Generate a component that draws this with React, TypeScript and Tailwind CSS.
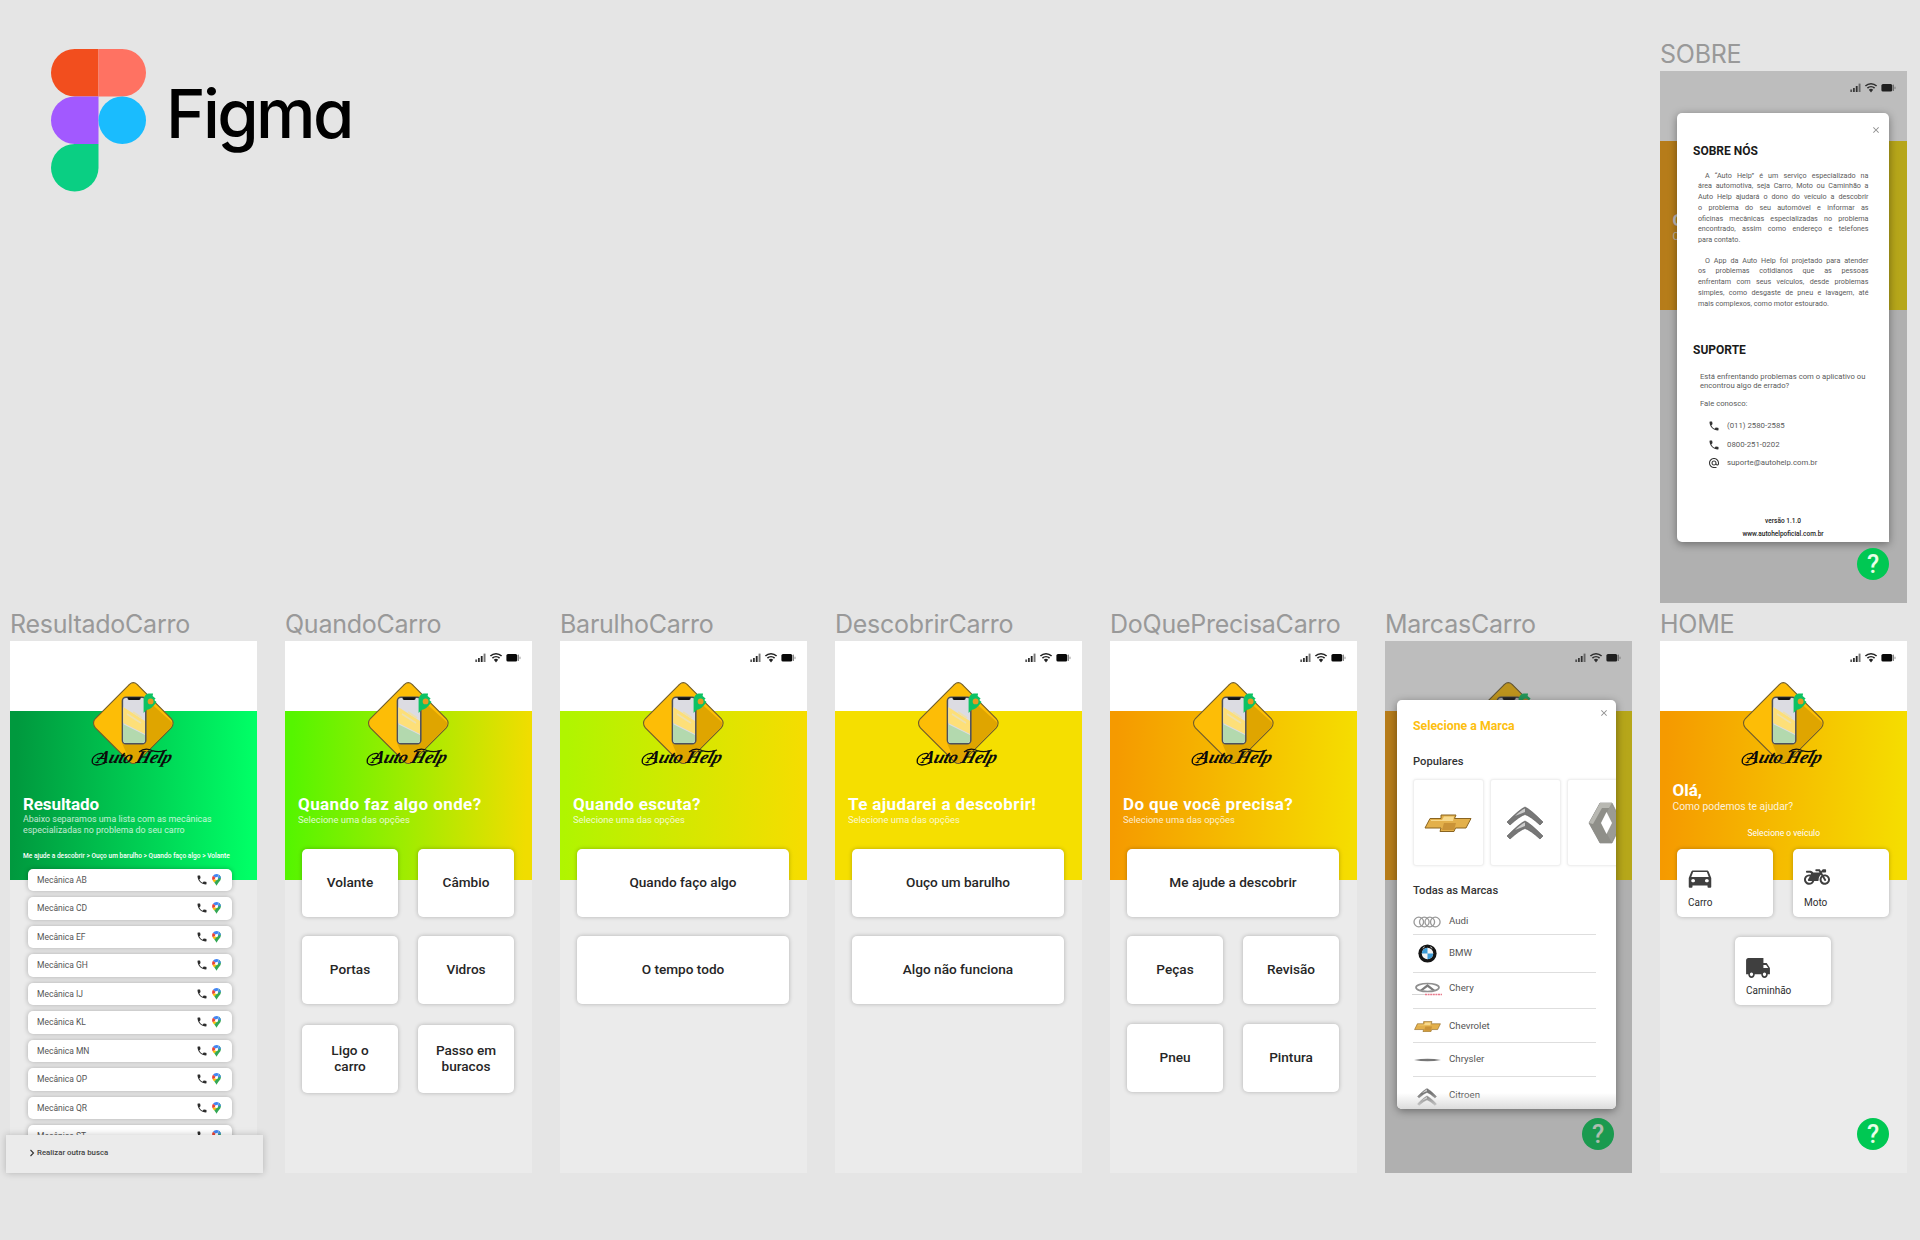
import React from "react";
import { MdPhone, MdDirectionsCar, MdLocalShipping, MdAlternateEmail, MdClose } from "react-icons/md";
import { FaMotorcycle } from "react-icons/fa";

const roboto = "font-['Roboto',sans-serif]";

function FigmaMark() {
  return (
    <svg width="95" height="143" viewBox="0 0 95 143" className="shrink-0">
      <path d="M47.5 0H23.75a23.75 23.75 0 0 0 0 47.5H47.5z" fill="#f24e1e" />
      <path d="M47.5 0h23.75a23.75 23.75 0 0 1 0 47.5H47.5z" fill="#ff7262" />
      <path d="M47.5 47.5H23.75a23.75 23.75 0 0 0 0 47.5H47.5z" fill="#a259ff" />
      <circle cx="71.25" cy="71.25" r="23.75" fill="#1abcfe" />
      <path d="M47.5 95H23.75A23.75 23.75 0 1 0 47.5 118.75z" fill="#0acf83" />
    </svg>
  );
}

function StatusIcons() {
  return (
    <svg width="46" height="12" viewBox="0 0 46 12" className="absolute top-[11px] left-[190px]">
      <rect x="0.3" y="7.5" width="1.8" height="2.5" fill="#555" />
      <rect x="3" y="6" width="1.8" height="4" fill="#333" />
      <rect x="5.8" y="4" width="1.8" height="6" fill="#222" />
      <rect x="8.6" y="1.6" width="1.9" height="8.4" fill="#777" />
      <path d="M15.4 4a8 8 0 0 1 11.2 0M17.4 6.2a5.2 5.2 0 0 1 7.2 0" fill="none" stroke="#222" strokeWidth="1.6" />
      <path d="M21 10.4l-2.2-2.6a3.2 3.2 0 0 1 4.4 0z" fill="#222" />
      <rect x="31.4" y="2" width="10.8" height="7.6" rx="1.6" fill="#080808" />
      <rect x="42.6" y="2.6" width="1.4" height="6.4" rx="0.6" fill="#888" />
      <rect x="44.4" y="4.4" width="1.2" height="2.8" rx="0.6" fill="#aaa" />
    </svg>
  );
}

function AppLogo() {
  return (
    <div className="absolute top-[40.500px] left-[81px] h-[88px] w-[84px]">
      <svg width="84" height="88" viewBox="0 0 84 88">
        <path d="M38.5 2.3Q42.3-1 46.1 2.3L80.2 36.5Q84 41 80.2 46L46 80Q42.3 83 38.6 80L4.4 46Q0.6 41 4.4 36.5z" fill="#fdbd06" stroke="#6f5c2c" strokeWidth="1.1" />
        <path d="M54 16L80 39.5Q82.6 42 79.4 45.6L46 79.4Q42.3 82 39 79.6L31 61H54z" fill="#dfa500" />
        <rect x="31.4" y="15.2" width="23.4" height="46.6" rx="3.6" fill="#dcdce2" stroke="#4b4f5c" strokeWidth="1.5" />
        <path d="M32.2 25l21.8 14v13L32.2 41z" fill="#fddf78" />
        <path d="M36 32l14 9M42 30l9 6" stroke="#ece0b0" strokeWidth="1.6" />
        <path d="M32.2 42.2L54 53v4.8q0 3.2-3 3.2H35q-2.8 0-2.8-3.2z" fill="#b3d9ae" />
        <path d="M36.6 15.2h13v1.4q0 1.4-1.6 1.4h-9.8q-1.6 0-1.6-1.4z" fill="#111" />
        <path d="M52.6 31V17q1-5 5-5.500h4.500l-0.500 2.500 3 2.500-1.300 1.500 2.200 2q-5 7.500-10 8z" fill="#0dc264" />
        <circle cx="59.600" cy="19.400" r="2.900" fill="#e89a20" />
      </svg>
      <div className="absolute top-[64px] left-[7px] -skew-x-[18deg] font-['Liberation_Serif',serif] text-[18px] leading-[22px] font-bold tracking-[-0.3px] whitespace-nowrap text-[#0b0b0b] italic">
        Auto Help
      </div>
      <svg width="84" height="20" viewBox="0 0 84 20" className="absolute top-[66px] left-0" fill="none" stroke="#0b0b0b" strokeWidth="1.300">
        <path d="M14 15Q4 19 1.500 15Q0 9 7 6Q13 4 12 8Q9 12 6 10" />
        <path d="M48 4Q54-1 61 2.500Q68 5 76 2" />
      </svg>
    </div>
  );
}

function HelpButton() {
  return (
    <div className={`absolute top-[477px] right-[18px] flex h-8 w-8 items-center justify-center rounded-full bg-[#00c853] ${roboto} text-[25px] leading-none font-medium text-[#e8ffe9]`}>
      ?
    </div>
  );
}

function Tile({ children, className = "w-[96px]" }: { children: React.ReactNode; className?: string }) {
  return (
    <div className={`flex h-[68px] items-center justify-center rounded-[5px] bg-white text-center ${roboto} text-[13.600px] leading-[15.500px] font-medium text-[#262626] shadow-[0_0_4px_rgba(0,0,0,0.25)] ${className}`}>
      {children}
    </div>
  );
}

const Pair = ({ children }: { children: React.ReactNode }) => <div className="flex gap-[20px]">{children}</div>;

const Tiles = ({ children }: { children: React.ReactNode }) => (
  <div className="-mt-[31px] ml-[17px] flex flex-col gap-[19.500px]">{children}</div>
);

type FrameProps = {
  name: string;
  band: string;
  status?: boolean;
  logo?: boolean;
  header?: React.ReactNode;
  overlay?: React.ReactNode;
  children?: React.ReactNode;
};

function Artboard({ name, band, status = true, logo = true, header, overlay, children }: FrameProps) {
  return (
    <section className="w-[247px] shrink-0">
      <h2 className="h-[38px] font-['Inter',sans-serif] text-[25px] leading-[42px] font-normal tracking-[-0.25px] whitespace-nowrap text-[#999]">{name}</h2>
      <div className="relative flex h-[532px] flex-col bg-[#ebebeb]">
        <div className="h-[70px] shrink-0 bg-white" />
        <div className={`h-[168.500px] shrink-0 ${band}`}>{header}</div>
        {logo && <AppLogo />}
        {status && <StatusIcons />}
        {children}
        {overlay}
      </div>
    </section>
  );
}

function Heading({ title, tracking }: { title: string; tracking: string }) {
  return (
    <div className={`pt-[83px] pl-[13px] text-white ${roboto}`}>
      <div className={`text-[17px] leading-[20px] font-bold whitespace-nowrap ${tracking}`}>{title}</div>
      <div className="text-[9.400px] leading-[11px] whitespace-nowrap opacity-80">Selecione uma das opções</div>
    </div>
  );
}

function HomeHeading() {
  return (
    <div className={`pt-[69px] pl-[12.500px] text-white ${roboto}`}>
      <div className="text-[17px] leading-[20px] font-bold">Olá,</div>
      <div className="text-[10.300px] leading-[13px] opacity-85">Como podemos te ajudar?</div>
      <div className="mt-[14px] pr-[12px] text-center text-[8.500px] leading-[12px]">Selecione o veículo</div>
    </div>
  );
}

function MapPin() {
  return (
    <svg width="9" height="12" viewBox="0 0 9 12">
      <path d="M4.500 0A4.400 4.400 0 0 0 1 1.700l3.500 2.900L7 .8A4.400 4.400 0 0 0 4.500 0z" fill="#4285f4" />
      <path d="M1 1.700A4.400 4.400 0 0 0 .6 6.200L4.500 4.600z" fill="#ea4335" />
      <path d="M.6 6.200Q1.300 7.500 2.300 8.600L6.500 4z" fill="#fbbc04" />
      <path d="M7 .8A4.400 4.400 0 0 1 8.400 6.200Q6 9 4.500 11.700 3.600 10 2.300 8.600L6 4.400z" fill="#34a853" />
      <path d="M7 .8A4.400 4.400 0 0 1 8.900 4L6 4.400z" fill="#4285f4" />
      <circle cx="4.500" cy="4.400" r="1.500" fill="#fff" />
    </svg>
  );
}

const shops = ["AB", "CD", "EF", "GH", "IJ", "KL", "MN", "OP", "QR", "ST"];

function ResultadoCarro() {
  return (
    <Artboard
      name="ResultadoCarro"
      status={false}
      band="bg-[linear-gradient(92deg,#00993e_3%,#00d656_60%,#00ff66_97%)]"
      header={
        <div className={`pt-[83px] pl-[13px] whitespace-nowrap text-white ${roboto}`}>
          <div className="text-[17px] leading-[20px] font-bold tracking-[-0.1px]">Resultado</div>
          <div className="text-[8.900px] leading-[10.500px] opacity-75">
            Abaixo separamos uma lista com as mecânicas
            <br />
            especializadas no problema do seu carro
          </div>
          <div className="mt-[15.500px] text-[6.600px] leading-[10px] font-medium">
            Me ajude a descobrir &gt; Ouço um barulho &gt; Quando faço algo &gt; Volante
          </div>
        </div>
      }
    >
      <div className="-mt-[11px] ml-[18px] flex w-[204px] flex-col gap-[6px]">
        {shops.map((s) => (
          <div key={s} className="flex h-[22.500px] shrink-0 items-center rounded-[5px] bg-white pr-[11px] pl-[9px] shadow-[0_0_5px_rgba(0,0,0,0.28)]">
            <span className={`flex-1 ${roboto} text-[8.500px] leading-none text-[#555]`}>Mecânica {s}</span>
            <MdPhone className="mr-[4px] h-[12px] w-[12px] text-[#2c2c2c]" />
            <MapPin />
          </div>
        ))}
      </div>
      <div className={`absolute top-[494px] -left-[4px] flex h-[38px] w-[257px] items-center bg-[#ebebeb] pb-[2px] pl-[23px] ${roboto} text-[7.800px] font-medium text-[#444] shadow-[0_0_7px_rgba(0,0,0,0.22)]`}>
        <svg width="8" height="8" viewBox="0 0 8 8" fill="none" stroke="#333" strokeWidth="1.100">
          <path d="M1.500 1l3 3-3 3" />
        </svg>
        Realizar outra busca
      </div>
    </Artboard>
  );
}

function VehicleTile({ icon, label }: { icon: React.ReactNode; label: string }) {
  return (
    <div className={`flex h-[68px] w-[96px] flex-col rounded-[5px] bg-white pt-[16px] pl-[11px] ${roboto} text-[10px] text-[#2e2e2e] shadow-[0_0_4px_rgba(0,0,0,0.25)]`}>
      <div className="h-[24px] text-[#3f3f3f]">{icon}</div>
      <div className="mt-[7px] leading-[14px]">{label}</div>
    </div>
  );
}

const homeBand = "bg-[linear-gradient(92deg,#f59a00_3%,#f5bc00_50%,#f5dd00_97%)]";

function Home() {
  return (
    <Artboard name="HOME" band={homeBand} header={<HomeHeading />}>
      <div className="-mt-[31px] ml-[17px] flex w-[212px] flex-col items-center gap-[20px]">
        <Pair>
          <VehicleTile icon={<MdDirectionsCar preserveAspectRatio="none" className="-ml-[3px] h-[26px] w-[30px]" />} label="Carro" />
          <VehicleTile icon={<FaMotorcycle className="h-[24px] w-[26px]" />} label="Moto" />
        </Pair>
        <VehicleTile icon={<MdLocalShipping preserveAspectRatio="none" className="-ml-px h-[30px] w-[26px]" />} label="Caminhão" />
      </div>
      <HelpButton />
    </Artboard>
  );
}

function Scrim() {
  return <div className="absolute inset-0 bg-[rgba(72,72,72,0.36)]" />;
}

const about = [
  "A “Auto Help” é um serviço especializado na",
  "área automotiva, seja Carro, Moto ou Caminhão a",
  "Auto Help ajudará o dono do veículo a descobrir",
  "o problema do seu automóvel e informar as",
  "oficinas mecânicas especializadas no problema",
  "encontrado, assim como endereço e telefones",
  "para contato.",
];
const about2 = [
  "O App da Auto Help foi projetado para atender",
  "os problemas cotidianos que as pessoas",
  "enfrentam com seus veículos, desde problemas",
  "simples, como desgaste de pneu e lavagem, até",
  "mais complexos, como motor estourado.",
];

function Justified({ lines }: { lines: string[] }) {
  return (
    <div>
      {lines.map((l, i) => (
        <div
          key={l}
          className={`h-[10.800px] whitespace-nowrap ${i === lines.length - 1 ? "" : "[text-align-last:justify]"} ${i === 0 ? "pl-[7px]" : ""}`}
        >
          {l}
        </div>
      ))}
    </div>
  );
}

function Contact({ icon, children }: { icon: React.ReactNode; children: React.ReactNode }) {
  return (
    <div className="flex h-[18.500px] items-center gap-[7px] text-[7.800px]">
      {icon}
      <span>{children}</span>
    </div>
  );
}

function SobreModal() {
  return (
    <>
      <Scrim />
      <div className={`absolute top-[42px] left-[17px] flex h-[429px] w-[212px] flex-col rounded-[5px] rounded-br-none bg-white pt-[31px] pl-[16px] ${roboto} text-[#5a5a5a] shadow-[0_2px_8px_rgba(0,0,0,0.4)]`}>
        <MdClose className="absolute top-[12px] right-[8px] h-[10px] w-[10px] text-[#8a8a8a]" />
        <div className="text-[12px] leading-[14px] font-bold text-[#1a1a1a]">SOBRE NÓS</div>
        <div className="mt-[12.500px] ml-[5px] flex w-[170.500px] flex-col gap-[9.500px] text-[7.200px] leading-[10.800px]">
          <Justified lines={about} />
          <Justified lines={about2} />
        </div>
        <div className="mt-[33.500px] text-[12px] leading-[14px] font-bold text-[#1a1a1a]">SUPORTE</div>
        <div className="mt-[14.500px] ml-[7px] w-[169px] text-[7.700px] leading-[9px]">
          <div className="whitespace-nowrap">Está enfrentando problemas com o aplicativo ou</div>
          <div>encontrou algo de errado?</div>
          <div className="mt-[9px]">Fale conosco:</div>
        </div>
        <div className="mt-[9.500px] ml-[15px]">
          <Contact icon={<MdPhone className="h-[12px] w-[12px] text-[#333]" />}>(011) 2580-2585</Contact>
          <Contact icon={<MdPhone className="h-[12px] w-[12px] text-[#333]" />}>0800-251-0202</Contact>
          <Contact icon={<MdAlternateEmail className="h-[12px] w-[12px] text-[#333]" />}>suporte@autohelp.com.br</Contact>
        </div>
        <div className="mt-[42px] mr-[16px] text-center text-[6.500px] leading-[13px] font-medium text-[#222]">
          <div>versão 1.1.0</div>
          <div>www.autohelpoficial.com.br</div>
        </div>
      </div>
      <HelpButton />
    </>
  );
}

function Bowtie({ className }: { className: string }) {
  return (
    <svg viewBox="0 0 48 18" className={className} preserveAspectRatio="none">
      <path d="M17 1h15l-1.500 3.500H47L42 14H31.500L30 17.500H16L17 14H1L6 4.500h11z" fill="#e3b04b" stroke="#8a6420" strokeWidth="1" />
      <path d="M7 6h11l2-3.500h10L29 7H7z" fill="#f7d98c" />
      <path d="M20 9h12l-2 7H18z" fill="#b98029" opacity="0.600" />
    </svg>
  );
}

function Chevrons({ className }: { className: string }) {
  return (
    <svg viewBox="0 0 38 34" className={className}>
      <path d="M19 1Q24 3 37 16L34 19Q24 10 19 8.500Q14 10 4 19L1 16Q14 3 19 1z" fill="#777" stroke="#555" strokeWidth="0.600" />
      <path d="M19 15Q24 17 37 30L34 33Q24 24 19 22.500Q14 24 4 33L1 30Q14 17 19 15z" fill="#777" stroke="#555" strokeWidth="0.600" />
      <path d="M19 2.500Q15 4 9 10L19 6zM19 16.500Q15 18 9 24L19 20z" fill="#ccc" />
    </svg>
  );
}

function Diamond() {
  return (
    <svg viewBox="0 0 34 42" className="h-[42px] w-[34px] shrink-0">
      <path d="M12 1H24L34 21 24 41H12L1 21z" fill="#9b9b95" stroke="#777" strokeWidth="0.600" />
      <path d="M12 1h12L13 21 24 41H12L1 21z" fill="#8f8f89" />
      <path d="M12 1h12l-3 5h-7L5 22 1 21z" fill="#b8b8b2" />
      <path d="M18.500 10L24 21l-5.500 11L13 21z" fill="#fff" />
    </svg>
  );
}

function Audi() {
  return (
    <svg viewBox="0 0 28 12" className="h-[12px] w-[28px]" fill="none" stroke="#999" strokeWidth="1.300">
      <circle cx="5.800" cy="6" r="4.800" />
      <circle cx="11.300" cy="6" r="4.800" />
      <circle cx="16.800" cy="6" r="4.800" />
      <circle cx="22.300" cy="6" r="4.800" />
    </svg>
  );
}

function Bmw() {
  return (
    <svg viewBox="0 0 20 20" className="h-[19px] w-[19px]">
      <circle cx="10" cy="10" r="9.600" fill="#151515" />
      <circle cx="10" cy="10" r="6" fill="#f4f4f4" />
      <path d="M10 10V4a6 6 0 0 0-6 6zM10 10v6a6 6 0 0 0 6-6z" fill="#3d9bd6" />
      <path d="M5 4.500l2-1.500M13 3l2 1.500" stroke="#ddd" strokeWidth="1" />
    </svg>
  );
}

function Chery() {
  return (
    <svg viewBox="0 0 30 14" className="h-[14px] w-[30px]">
      <ellipse cx="15.500" cy="5.500" rx="11.500" ry="4" fill="none" stroke="#909090" strokeWidth="1.700" />
      <path d="M8 8L15.500 2 23 8h-3.500l-4-3-4 3z" fill="#7c7c7c" />
      <path d="M0 12.500h13" stroke="#ccc" strokeWidth="0.800" />
      <path d="M13 12.400h17" stroke="#e87a8c" strokeWidth="1.500" strokeDasharray="2 0.600" />
    </svg>
  );
}

function Chrysler() {
  return (
    <svg viewBox="0 0 28 4" className="h-[4px] w-[27px]">
      <path d="M0 2Q14-.5 28 2Q14 4.500 0 2z" fill="#777" />
    </svg>
  );
}

const brands: { name: string; logo: React.ReactNode; row: string }[] = [
  { name: "Audi", logo: <Audi />, row: "h-[26px]" },
  { name: "BMW", logo: <Bmw />, row: "h-[38px]" },
  { name: "Chery", logo: <Chery />, row: "h-[36px] pb-[4px]" },
  { name: "Chevrolet", logo: <Bowtie className="h-[11px] w-[27px]" />, row: "h-[34px] pt-[2px]" },
  { name: "Chrysler", logo: <Chrysler />, row: "h-[34px]" },
  { name: "Citroen", logo: <Chevrons className="mt-[3px] h-[18px] w-[22px]" />, row: "h-[37px] border-b-0" },
];

function BrandCard({ children, className = "justify-center" }: { children: React.ReactNode; className?: string }) {
  return (
    <div className={`flex h-[87px] w-[71px] shrink-0 items-center rounded-[3px] border border-[#f0f0f0] bg-white shadow-[0_0_3px_rgba(0,0,0,0.08)] ${className}`}>{children}</div>
  );
}

function MarcasModal() {
  return (
    <>
      <HelpButton />
      <Scrim />
      <div className="absolute top-[59px] left-[12px] h-[409px] w-[218.500px] rounded-[5px] shadow-[0_2px_8px_rgba(0,0,0,0.4)]">
        <div className={`relative h-full overflow-hidden rounded-[5px] bg-white pt-[19px] pl-[16px] ${roboto}`}>
          <MdClose className="absolute top-[8px] right-[7px] h-[10px] w-[10px] text-[#8a8a8a]" />
          <div className="text-[12.300px] leading-[14px] font-bold text-[#fdbf10]">Selecione a Marca</div>
          <div className="mt-[22px] text-[11.200px] leading-[14px] font-medium text-[#333]">Populares</div>
          <div className="mt-[10px] flex gap-[6px]">
            <BrandCard className="justify-center pr-[2px]">
              <Bowtie className="h-[18px] w-[48px]" />
            </BrandCard>
            <BrandCard className="justify-center pr-[2px]">
              <Chevrons className="h-[34px] w-[38px]" />
            </BrandCard>
            <BrandCard className="pl-[20px]">
              <Diamond />
            </BrandCard>
          </div>
          <div className="mt-[17.500px] text-[11.200px] leading-[14px] font-medium text-[#333]">Todas as Marcas</div>
          <div className="mt-[11.500px] w-[183px]">
            {brands.map((b) => (
              <div key={b.name} className={`flex items-center border-b border-[#dedede] text-[9.700px] text-[#555] ${b.row}`}>
                <div className="mr-[7px] -ml-px flex w-[30px] justify-center">{b.logo}</div>
                {b.name}
              </div>
            ))}
          </div>
          <div className="absolute inset-x-0 bottom-0 h-[16px] bg-gradient-to-t from-[#dcdcdc] to-transparent" />
        </div>
      </div>
    </>
  );
}

export default function App() {
  return (
    <main className="h-[1240px] w-[1920px] overflow-hidden bg-[#e5e5e5]">
      <div className="flex h-[603px] justify-between pr-[13px] pl-[51px]">
        <div className="flex pt-[49px]">
          <FigmaMark />
          <span className="ml-[20px] pt-[25px] font-['Inter',sans-serif] text-[67px] leading-[80px] font-medium tracking-[-2.600px] text-black [font-feature-settings:'cv11']">Figma</span>
        </div>
        <div className="pt-[33px]">
          <Artboard
            name="SOBRE"
            band={homeBand}
            logo={false}
            header={
              <div className={`w-[17px] overflow-hidden pt-[69px] pl-[12.500px] whitespace-nowrap text-white ${roboto}`}>
                <div className="text-[17px] leading-[20px] font-bold">O</div>
                <div className="text-[10.300px] leading-[13px] opacity-85">C</div>
              </div>
            }
            overlay={<SobreModal />}
          />
        </div>
      </div>
      <div className="flex gap-[28px] pl-[10px]">
        <ResultadoCarro />
        <Artboard
          name="QuandoCarro"
          band="bg-[linear-gradient(92deg,#55f500_3%,#a0ec00_50%,#f0dd00_97%)]"
          header={<Heading title="Quando faz algo onde?" tracking="tracking-[0.42px]" />}
        >
          <Tiles>
            <Pair>
              <Tile>Volante</Tile>
              <Tile>Câmbio</Tile>
            </Pair>
            <Pair>
              <Tile>Portas</Tile>
              <Tile>Vidros</Tile>
            </Pair>
            <div className="pt-px">
              <Pair>
                <Tile>
                  Ligo o<br />
                  carro
                </Tile>
                <Tile>
                  Passo em
                  <br />
                  buracos
                </Tile>
              </Pair>
            </div>
          </Tiles>
        </Artboard>
        <Artboard
          name="BarulhoCarro"
          band="bg-[linear-gradient(92deg,#b0f500_3%,#d4e800_50%,#f5dd00_97%)]"
          header={<Heading title="Quando escuta?" tracking="tracking-[0.35px]" />}
        >
          <Tiles>
            <Tile className="w-[212px]">Quando faço algo</Tile>
            <Tile className="w-[212px]">O tempo todo</Tile>
          </Tiles>
        </Artboard>
        <Artboard name="DescobrirCarro" band="bg-[#f5df00]" header={<Heading title="Te ajudarei a descobrir!" tracking="tracking-[0.38px]" />}>
          <Tiles>
            <Tile className="w-[212px]">Ouço um barulho</Tile>
            <Tile className="w-[212px]">Algo não funciona</Tile>
          </Tiles>
        </Artboard>
        <Artboard name="DoQuePrecisaCarro" band={homeBand} header={<Heading title="Do que você precisa?" tracking="tracking-[0.4px]" />}>
          <Tiles>
            <Tile className="w-[212px]">Me ajude a descobrir</Tile>
            <Pair>
              <Tile>Peças</Tile>
              <Tile>Revisão</Tile>
            </Pair>
            <Pair>
              <Tile>Pneu</Tile>
              <Tile>Pintura</Tile>
            </Pair>
          </Tiles>
        </Artboard>
        <Artboard name="MarcasCarro" band={homeBand} overlay={<MarcasModal />} />
        <Home />
      </div>
    </main>
  );
}
